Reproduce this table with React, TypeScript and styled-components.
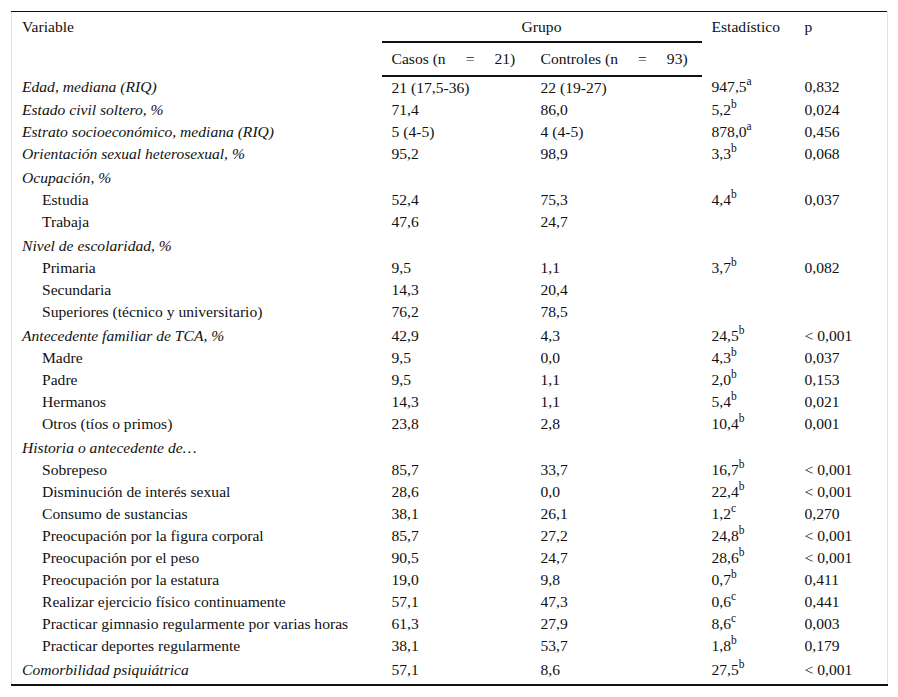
import React from 'react';
import styled, { createGlobalStyle } from 'styled-components';

type Row = {
  label: string
  italic?: boolean
  indent?: boolean
  spaced?: boolean
  casos?: string
  controles?: string
  stat?: string
  sup?: string
  p?: string
}

const rows: Row[] = [
  { label: 'Edad, mediana (RIQ)', italic: true, casos: '21 (17,5-36)', controles: '22 (19-27)', stat: '947,5', sup: 'a', p: '0,832' },
  { label: 'Estado civil soltero, %', italic: true, casos: '71,4', controles: '86,0', stat: '5,2', sup: 'b', p: '0,024' },
  { label: 'Estrato socioeconómico, mediana (RIQ)', italic: true, casos: '5 (4-5)', controles: '4 (4-5)', stat: '878,0', sup: 'a', p: '0,456' },
  { label: 'Orientación sexual heterosexual, %', italic: true, casos: '95,2', controles: '98,9', stat: '3,3', sup: 'b', p: '0,068' },
  { label: 'Ocupación, %', italic: true, spaced: true },
  { label: 'Estudia', indent: true, casos: '52,4', controles: '75,3', stat: '4,4', sup: 'b', p: '0,037' },
  { label: 'Trabaja', indent: true, casos: '47,6', controles: '24,7' },
  { label: 'Nivel de escolaridad, %', italic: true, spaced: true },
  { label: 'Primaria', indent: true, casos: '9,5', controles: '1,1', stat: '3,7', sup: 'b', p: '0,082' },
  { label: 'Secundaria', indent: true, casos: '14,3', controles: '20,4' },
  { label: 'Superiores (técnico y universitario)', indent: true, casos: '76,2', controles: '78,5' },
  { label: 'Antecedente familiar de TCA, %', italic: true, spaced: true, casos: '42,9', controles: '4,3', stat: '24,5', sup: 'b', p: '< 0,001' },
  { label: 'Madre', indent: true, casos: '9,5', controles: '0,0', stat: '4,3', sup: 'b', p: '0,037' },
  { label: 'Padre', indent: true, casos: '9,5', controles: '1,1', stat: '2,0', sup: 'b', p: '0,153' },
  { label: 'Hermanos', indent: true, casos: '14,3', controles: '1,1', stat: '5,4', sup: 'b', p: '0,021' },
  { label: 'Otros (tíos o primos)', indent: true, casos: '23,8', controles: '2,8', stat: '10,4', sup: 'b', p: '0,001' },
  { label: 'Historia o antecedente de…', italic: true, spaced: true },
  { label: 'Sobrepeso', indent: true, casos: '85,7', controles: '33,7', stat: '16,7', sup: 'b', p: '< 0,001' },
  { label: 'Disminución de interés sexual', indent: true, casos: '28,6', controles: '0,0', stat: '22,4', sup: 'b', p: '< 0,001' },
  { label: 'Consumo de sustancias', indent: true, casos: '38,1', controles: '26,1', stat: '1,2', sup: 'c', p: '0,270' },
  { label: 'Preocupación por la figura corporal', indent: true, casos: '85,7', controles: '27,2', stat: '24,8', sup: 'b', p: '< 0,001' },
  { label: 'Preocupación por el peso', indent: true, casos: '90,5', controles: '24,7', stat: '28,6', sup: 'b', p: '< 0,001' },
  { label: 'Preocupación por la estatura', indent: true, casos: '19,0', controles: '9,8', stat: '0,7', sup: 'b', p: '0,411' },
  { label: 'Realizar ejercicio físico continuamente', indent: true, casos: '57,1', controles: '47,3', stat: '0,6', sup: 'c', p: '0,441' },
  { label: 'Practicar gimnasio regularmente por varias horas', indent: true, casos: '61,3', controles: '27,9', stat: '8,6', sup: 'c', p: '0,003' },
  { label: 'Practicar deportes regularmente', indent: true, casos: '38,1', controles: '53,7', stat: '1,8', sup: 'b', p: '0,179' },
  { label: 'Comorbilidad psiquiátrica', italic: true, spaced: true, casos: '57,1', controles: '8,6', stat: '27,5', sup: 'b', p: '< 0,001' },
]

export default function App() {
  return (
    <>
      <GlobalStyle />
      <Page>
        <Table>
          <colgroup>
            <col style={{ width: 370 }} />
            <col style={{ width: 149 }} />
            <col style={{ width: 171 }} />
            <col style={{ width: 93 }} />
            <col style={{ width: 93 }} />
          </colgroup>
          <thead>
            <tr>
              <HeadCell rowSpan={2}>Variable</HeadCell>
              <GroupCell colSpan={2}>Grupo</GroupCell>
              <HeadCell rowSpan={2}>Estadístico</HeadCell>
              <HeadCell rowSpan={2}>p</HeadCell>
            </tr>
            <tr>
              <SubHeadCell>Casos (n<Eq>=</Eq>21)</SubHeadCell>
              <SubHeadCell>Controles (n<Eq>=</Eq>93)</SubHeadCell>
            </tr>
          </thead>
          <tbody>
            {rows.map((row, i) => (
              <BodyRow key={row.label} $last={i === rows.length - 1}>
                <Cell $italic={row.italic} $indent={row.indent} $spaced={row.spaced}>{row.label}</Cell>
                <Cell $spaced={row.spaced}>{row.casos}</Cell>
                <Cell $spaced={row.spaced}>{row.controles}</Cell>
                <Cell $spaced={row.spaced}>
                  {row.stat}
                  {row.sup ? <Sup>{row.sup}</Sup> : null}
                </Cell>
                <Cell $spaced={row.spaced}>{row.p}</Cell>
              </BodyRow>
            ))}
          </tbody>
        </Table>
      </Page>
    </>
  );
}

const GlobalStyle = createGlobalStyle`
  body {
    margin: 0;
    background: #fff;
    color: #111;
    font-family: "Liberation Serif", "Times New Roman", serif;
  }
`

const Page = styled.div`
  padding: 11px;
`

const Table = styled.table`
  width: 876px;
  table-layout: fixed;
  border-collapse: collapse;
  font-size: 15.6px;
  line-height: 18px;
  border-top: 1px solid #111;
  border-left: 1px solid #e2e2e2;
  border-right: 1px solid #e2e2e2;

  thead tr:last-child th {
    border-bottom: 2px solid #111;
  }
`

const HeadCell = styled.th`
  text-align: left;
  vertical-align: top;
  font-weight: normal;
  padding: 6px 10px 5px;
  white-space: nowrap;
`

const GroupCell = styled(HeadCell)`
  text-align: center;
  border-bottom: 2px solid #111;
`

const SubHeadCell = styled(HeadCell)`
  padding: 7px 10px 7px;
`

const Eq = styled.span`
  margin: 0 20px;
`

const BodyRow = styled.tr<{ $last?: boolean }>`
  td {
    padding-bottom: ${p => (p.$last ? '5px' : '2px')};
  }
  ${p => p.$last && 'border-bottom: 2px solid #111;'}
`

const Cell = styled.td<{ $italic?: boolean; $indent?: boolean; $spaced?: boolean }>`
  padding-top: ${p => (p.$spaced ? '4px' : '2px')};
  padding-left: ${p => (p.$indent ? '30px' : '10px')};
  padding-right: 10px;
  font-style: ${p => (p.$italic ? 'italic' : 'normal')};
  white-space: nowrap;
  vertical-align: top;
`

const Sup = styled.sup`
  font-size: 11.5px;
  line-height: 0;
  vertical-align: 7px;
`
